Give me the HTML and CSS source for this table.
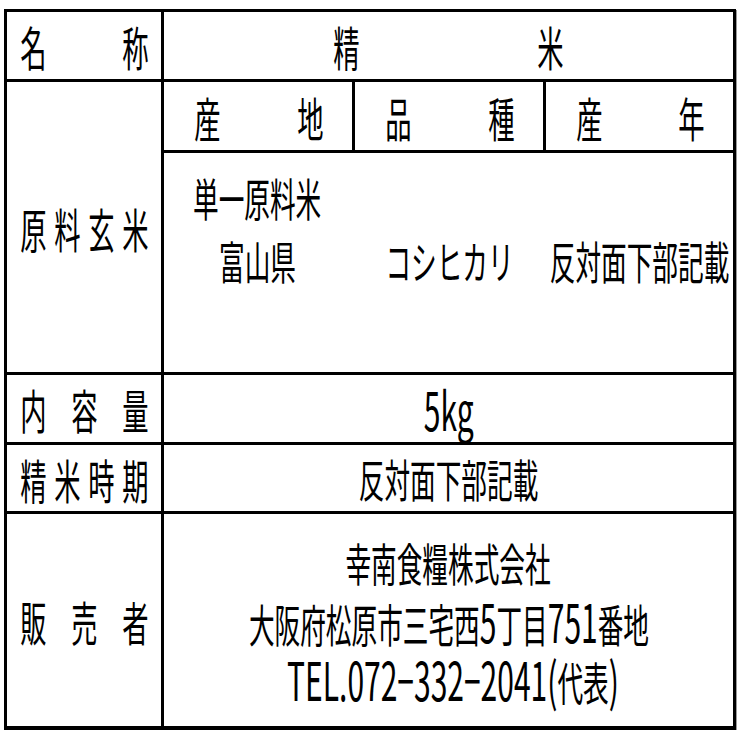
FILE: index.html
```html
<!DOCTYPE html>
<html lang="ja">
<head>
<meta charset="utf-8">
<title>精米 表示</title>
<link rel="stylesheet" href="styles.css">
</head>
<body>
<div class="sheet">
  <div class="cell c-label r-name">
    <div class="lbl"><span class="ch"><span class="g">名</span></span><span class="ch"><span class="g">称</span></span></div>
  </div>
  <div class="cell c-wide r-name">
    <div class="lbl lbl-name"><span class="ch"><span class="g">精</span></span><span class="ch"><span class="g">米</span></span></div>
  </div>

  <div class="cell c-label r-raw">
    <div class="lbl"><span class="ch"><span class="g">原</span></span><span class="ch"><span class="g">料</span></span><span class="ch"><span class="g">玄</span></span><span class="ch"><span class="g">米</span></span></div>
  </div>
  <div class="cell c2 r-sub">
    <div class="lbl lbl-sub"><span class="ch"><span class="g">産</span></span><span class="ch"><span class="g">地</span></span></div>
  </div>
  <div class="cell c3 r-sub">
    <div class="lbl lbl-sub"><span class="ch"><span class="g">品</span></span><span class="ch"><span class="g">種</span></span></div>
  </div>
  <div class="cell c4 r-sub">
    <div class="lbl lbl-sub"><span class="ch"><span class="g">産</span></span><span class="ch"><span class="g">年</span></span></div>
  </div>
  <div class="cell c-wide r-rawbody raw-body">
    <div class="line line-left"><span class="t">単一原料米</span></div>
    <div class="raw-cols">
      <div class="line"><span class="t">富山県</span></div>
      <div class="line"><span class="t">コシヒカリ</span></div>
      <div class="line"><span class="t">反対面下部記載</span></div>
    </div>
  </div>

  <div class="cell c-label r-vol">
    <div class="lbl"><span class="ch"><span class="g">内</span></span><span class="ch"><span class="g">容</span></span><span class="ch"><span class="g">量</span></span></div>
  </div>
  <div class="cell c-wide r-vol center-body">
    <div class="line"><span class="t"><span class="lat">5kg</span></span></div>
  </div>

  <div class="cell c-label r-date">
    <div class="lbl"><span class="ch"><span class="g">精</span></span><span class="ch"><span class="g">米</span></span><span class="ch"><span class="g">時</span></span><span class="ch"><span class="g">期</span></span></div>
  </div>
  <div class="cell c-wide r-date center-body">
    <div class="line"><span class="t">反対面下部記載</span></div>
  </div>

  <div class="cell c-label r-seller">
    <div class="lbl"><span class="ch"><span class="g">販</span></span><span class="ch"><span class="g">売</span></span><span class="ch"><span class="g">者</span></span></div>
  </div>
  <div class="cell c-wide r-seller center-body seller">
    <div class="line"><span class="t">幸南食糧株式会社</span></div>
    <div class="line"><span class="t">大阪府松原市三宅西<span class="lat">5</span>丁目<span class="lat">751</span>番地</span></div>
    <div class="line line-tel"><span class="t"><span class="lat">TEL.072−332−2041(</span>代表<span class="lat">)</span></span></div>
  </div>
</div>
</body>
</html>
```

FILE: styles.css
```css
html, body {
  margin: 0;
  padding: 0;
  background: #ffffff;
}

body {
  font-family: "Noto Sans CJK JP", "Noto Sans", sans-serif;
  color: #000000;
}

.sheet {
  display: grid;
  grid-template-columns: 154px 188px 188px 187px;
  grid-template-rows: 67px 68px 219px 67px 66px 212px;
  gap: 3px;
  padding: 3px 3px 4px 3px;
  background: #000000;
  width: max-content;
  margin: 9px 0 0 4px;
  box-shadow: 1px 1px 0 #9a9a9a;
}

.cell {
  background: #ffffff;
  min-width: 0;
}

.c-label { grid-column: 1; }
.c-wide { grid-column: 2 / 5; }
.c2 { grid-column: 2; }
.c3 { grid-column: 3; }
.c4 { grid-column: 4; }

.r-name { grid-row: 1; }
.r-raw { grid-row: 2 / 4; }
.r-sub { grid-row: 2; }
.r-rawbody { grid-row: 3; }
.r-vol { grid-row: 4; }
.r-date { grid-row: 5; }
.r-seller { grid-row: 6; }

/* distributed labels */
.lbl {
  display: flex;
  justify-content: space-between;
  align-items: center;
  height: 100%;
  padding: 0 13px;
}

.lbl-name {
  padding: 0 170px 0 169px;
}

.lbl-sub {
  padding: 0 29px 0 30px;
}

.ch {
  width: 26px;
  display: flex;
  justify-content: center;
  align-items: center;
}

.g {
  flex: none;
  font-size: 47px;
  line-height: 1;
  transform: scaleX(0.56);
}

/* content lines */
.line {
  display: flex;
  justify-content: center;
  align-items: center;
  white-space: nowrap;
}

.t {
  flex: none;
  font-size: 45px;
  line-height: 1;
  font-weight: 400;
  transform: scaleX(0.57);
}

.lat {
  font-size: 1.17em;
  line-height: 1;
}

.line-tel {
  padding-left: 8px;
}

.line-left {
  justify-content: flex-start;
  padding-left: 29px;
}

.line-left .t {
  transform-origin: left center;
}

.raw-body {
  padding-top: 13px;
  box-sizing: border-box;
}

.raw-body .line {
  height: 63px;
}

.raw-cols {
  display: grid;
  grid-template-columns: 188px 194px 187px;
}

.center-body {
  display: flex;
  flex-direction: column;
  justify-content: center;
}

.center-body .line {
  height: 58px;
}
```
